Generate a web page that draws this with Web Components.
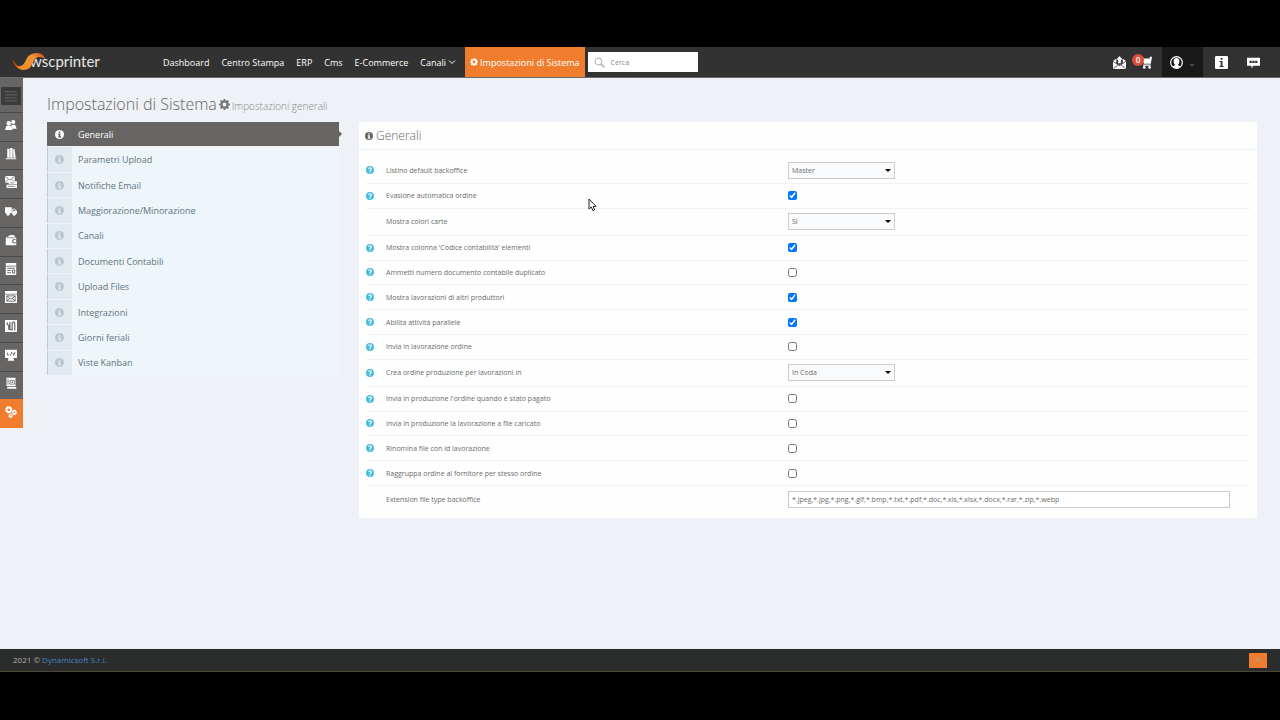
<!DOCTYPE html>
<html lang="it">
<head>
<meta charset="utf-8">
<title>Impostazioni di Sistema</title>
<style>
    body {
        margin: 0;
        background-color: #000;
        font-family: "Open Sans", "Noto Sans", sans-serif;
        font-size: 9px;
        --wsc-orange: #f07d2e;
        --wsc-dark: #323232;
        --wsc-grey: #666564;
    }
</style>
</head>
<body>
<wsc-page>
    <wsc-topbar slot="top">
        <wsc-nav-link>Dashboard</wsc-nav-link>
        <wsc-nav-link>Centro Stampa</wsc-nav-link>
        <wsc-nav-link>ERP</wsc-nav-link>
        <wsc-nav-link>Cms</wsc-nav-link>
        <wsc-nav-link>E-Commerce</wsc-nav-link>
        <wsc-nav-link dropdown>Canali</wsc-nav-link>
        <wsc-nav-link active icon="gear">Impostazioni di Sistema</wsc-nav-link>
    </wsc-topbar>
    <wsc-rail slot="rail"></wsc-rail>
    <wsc-heading sub="Impostazioni generali">Impostazioni di Sistema</wsc-heading>
    <wsc-columns>
        <wsc-tabs slot="aside">
            <wsc-tab active>Generali</wsc-tab>
            <wsc-tab>Parametri Upload</wsc-tab>
            <wsc-tab>Notifiche Email</wsc-tab>
            <wsc-tab>Maggiorazione/Minorazione</wsc-tab>
            <wsc-tab>Canali</wsc-tab>
            <wsc-tab>Documenti Contabili</wsc-tab>
            <wsc-tab>Upload Files</wsc-tab>
            <wsc-tab>Integrazioni</wsc-tab>
            <wsc-tab>Giorni feriali</wsc-tab>
            <wsc-tab>Viste Kanban</wsc-tab>
        </wsc-tabs>
        <wsc-panel title-text="Generali">
            <wsc-field help type="select" label="Listino default backoffice" value="Master"></wsc-field>
            <wsc-field help type="checkbox" label="Evasione automatica ordine" checked></wsc-field>
            <wsc-field type="select" label="Mostra colori carte" value="Si"></wsc-field>
            <wsc-field help type="checkbox" label="Mostra colonna 'Codice contabilità' elementi" checked></wsc-field>
            <wsc-field help type="checkbox" label="Ammetti numero documento contabile duplicato"></wsc-field>
            <wsc-field help type="checkbox" label="Mostra lavorazioni di altri produttori" checked></wsc-field>
            <wsc-field help type="checkbox" label="Abilita attività parallele" checked></wsc-field>
            <wsc-field help type="checkbox" label="Invia in lavorazione ordine"></wsc-field>
            <wsc-field help type="select" label="Crea ordine produzione per lavorazioni in" value="In Coda"></wsc-field>
            <wsc-field help type="checkbox" label="Invia in produzione l'ordine quando è stato pagato"></wsc-field>
            <wsc-field help type="checkbox" label="Invia in produzione la lavorazione a file caricato"></wsc-field>
            <wsc-field help type="checkbox" label="Rinomina file con id lavorazione"></wsc-field>
            <wsc-field help type="checkbox" label="Raggruppa ordine al fornitore per stesso ordine"></wsc-field>
            <wsc-field type="text" label="Extension file type backoffice" value="*.jpeg,*.jpg,*.png,*.gif,*.bmp,*.txt,*.pdf,*.doc,*.xls,*.xlsx,*.docx,*.rar,*.zip,*.webp"></wsc-field>
        </wsc-panel>
    </wsc-columns>
    <wsc-footer slot="bottom"></wsc-footer>
</wsc-page>

<script>
const ICONS = {
    gear: '<path fill="currentColor" fill-rule="evenodd" d="M6.800 0h2.400l.4 2.100 1.300.5L12.700 1.400l1.900 1.900-1.200 1.800.5 1.300 2.100.4v2.400l-2.100.4-.5 1.300 1.200 1.800-1.900 1.900-1.800-1.200-1.300.5-.4 2.100H6.800l-.4-2.100-1.300-.5-1.800 1.200-1.900-1.900 1.200-1.800-.5-1.300L0 9.200V6.800l2.100-.4.5-1.300-1.200-1.800 1.900-1.900 1.800 1.200 1.300-.5zM8 5.200a2.800 2.800 0 1 0 0 5.600 2.800 2.800 0 0 0 0-5.600z"/>',
    info: '<circle cx="8" cy="8" r="8" fill="currentColor"/><path fill="var(--icon-hole, #fff)" d="M6.500 2.500h3v2.500h-3zM5.500 6.300h4v5h1.300v2H5.500v-2h1.200v-3H5.500z"/>',
    help: '<circle cx="8" cy="8" r="8" fill="currentColor"/><path fill="none" stroke="#fff" stroke-width="2.200" d="M5.200 5.800C5.500 2.800 10.800 2.800 10.800 5.800 10.800 7.700 8 7.700 8 10"/><path fill="#fff" d="M6.900 11.200h2.300v2.200H6.900z"/>',
    chevron: '<path fill="none" stroke="currentColor" stroke-width="2" d="M2 5l6 6 6-6"/>',
    search: '<circle cx="6.500" cy="6.500" r="4.800" fill="none" stroke="currentColor" stroke-width="1.800"/><path stroke="currentColor" stroke-width="2.600" d="M10 10l5 5"/>',
    bars: '<path stroke="currentColor" stroke-width="1" d="M0 2.500h16M0 6.500h16M0 10.500h16M0 14.500h16"/>',
    users: '<g fill="currentColor"><circle cx="11" cy="4" r="2.800"/><path d="M8.500 7.500h5L15.500 13H9z"/><circle cx="5" cy="5.500" r="3"/><path d="M2 9h6l2 5.500H0z"/></g>',
    binders: '<g fill="currentColor"><path d="M3 1h3.200v12H3zM6.900 0h3.200v13H6.900zM10.800 1.500l1.900-.3 1.600 11.800h-3.200zM1 13.500h14V15H1z"/></g>',
    mailbox: '<path fill="currentColor" d="M0 0h13v9H0z"/><path fill="none" stroke="#666564" d="M0 .5l6.500 5L13 .5M0 8.500l4.500-4M13 8.500l-4.500-4"/><path fill="currentColor" d="M5 7h11v4H5zM2 11.700h14V16H2z"/><path stroke="#666564" d="M7 9.200h5M4 13.800h9"/>',
    truck: '<g fill="currentColor"><path d="M0 3h9v8H0zM9.700 5h3.300L16 8v3.500H9.700z"/><circle cx="4" cy="12" r="2.300"/><circle cx="12.200" cy="12" r="2.300"/></g><path fill="#666564" d="M10.800 6h1.800l1.600 2h-3.400z"/>',
    wallet: '<path fill="currentColor" d="M1 5l7-4 5 1v2.500h2V15H1z"/><path fill="none" stroke="#666564" d="M2.500 5H13"/><circle cx="12.500" cy="9.500" r="3" fill="#666564"/><circle cx="13" cy="9.500" r="1.800" fill="currentColor"/>',
    layout: '<path fill="currentColor" d="M1 0h14v3.500H1zM1 4.500h14V16H1z"/><path stroke="#666564" fill="none" stroke-width="1.300" d="M3 7h10M3 10h5M3 13h5M10 9.500h3v4h-3z"/>',
    webmail: '<path fill="currentColor" d="M0 0h16v3.500H0zM0 4.500h16V16H0z"/><path stroke="#666564" fill="none" stroke-width="1.200" d="M2.500 6.500h11v7h-11zM2.500 6.500L8 11l5.500-4.500M2.500 13.500l4-4M13.500 13.500l-4-4"/>',
    tools: '<path fill="currentColor" d="M0 0h16v16H0z"/><path stroke="#666564" fill="none" stroke-width="1.600" d="M3 3v3l2 1v6M6.500 2.500v10l3 .5V4l2-1.500 1.500 2V14"/>',
    monitor: '<path fill="currentColor" d="M0 1h16v11H0zM5 12h6l1.500 3.500h-9z"/><path stroke="#666564" fill="none" stroke-width="1.200" d="M3 4.500v3.500h2.500M7 9l2-5M10.500 5l1 3.500L13.500 4"/>',
    book: '<path fill="currentColor" d="M2 1h12v11H2zM3 13h12v2.500H3z"/><path stroke="#666564" fill="none" d="M4 2.500v8M6.500 4.500h6v5h-6zM8 8V6.500M10 8V5.500"/>',
    gears: '<g fill="none" stroke="currentColor"><circle cx="5" cy="5" r="3" stroke-width="2.400"/><circle cx="5" cy="5" r="4.400" stroke-width="1.200" stroke-dasharray="1.700 1.700"/><circle cx="12.500" cy="8.500" r="2.100" stroke-width="1.900"/><circle cx="12.500" cy="8.500" r="3.200" stroke-dasharray="1.200 1.200"/><circle cx="7.500" cy="13" r="1.700" stroke-width="1.600"/><circle cx="7.500" cy="13" r="2.600" stroke-dasharray="1 1"/></g>',
    inbox: '<path fill="currentColor" d="M0 6l4-2.500V9l4 2.500L12 9V3.500L16 6v10H0z"/><path fill="currentColor" d="M8 0l4 4.500H9.700V9H6.300V4.500H4z"/><path stroke="#323232" fill="none" stroke-width="1" d="M0 6.500l8 5.500 8-5.500M.5 15.500L6 11M15.500 15.500L10 11"/>',
    cart: '<path fill="currentColor" d="M16 1l-1.500 8.500H6L3.500 3H0V1.500h5L6 3h7l.5-2zM5 10.500h9.500V12H5z"/><circle cx="6.500" cy="14" r="1.700" fill="currentColor"/><circle cx="13" cy="14" r="1.700" fill="currentColor"/>',
    user: '<circle cx="8" cy="8" r="7.200" fill="none" stroke="currentColor" stroke-width="1.500"/><path fill="currentColor" d="M8 2.500c2.500 0 3.800 1.800 3.600 4C11.500 8.500 10.800 9.500 10 10.500v1l3 1.500C10.500 16 5.500 16 3 13l3-1.500v-1C5.200 9.500 4.500 8.500 4.400 6.500 4.200 4.300 5.500 2.500 8 2.500z"/>',
    infobox: '<rect width="16" height="16" rx="1.500" fill="currentColor"/><path fill="#323232" d="M7 2.500h2.300v2.200H7zM5.500 6.200h3.700v6h1.500v1.300H5.500v-1.300H7V7.500H5.500z"/>',
    chat: '<path fill="currentColor" d="M0 2h16v10H8l-2.500 3V12H0z"/><path stroke="#323232" stroke-width="2.600" stroke-dasharray="2.800 .7" d="M3 7.200h10.300"/>',
    up: '<path fill="none" stroke="#b49a78" stroke-width="2" stroke-dasharray="3 1" d="M2 12l6-6 6 6"/><circle cx="8" cy="5" r="2" fill="#b49a78"/>'
};

class WscElement extends HTMLElement {
    constructor() {
        super();
        this.attachShadow({mode: 'open'});
    }

    connectedCallback() {
        this.shadowRoot.innerHTML = this.render();
    }
}

class WscIcon extends WscElement {
    render() {
        return `
            <style>
                :host {
                    display: inline-block;
                    flex: none;
                    width: var(--icon-size, 12px);
                    height: var(--icon-size, 12px);
                }
                svg {
                    display: block;
                    width: 100%;
                    height: 100%;
                }
            </style>
            <svg viewBox="0 0 16 16" aria-hidden="true">${ICONS[this.getAttribute('name')]}</svg>
        `;
    }
}

class WscPage extends WscElement {
    render() {
        return `
            <style>
                :host {
                    display: flex;
                    flex-direction: column;
                    box-sizing: border-box;
                    min-height: 100vh;
                    padding: 47px 0 48px;
                }
                .body {
                    display: flex;
                    flex: 1;
                    align-items: flex-start;
                    background-color: #eef1f5;
                }
                main {
                    flex: 1;
                    min-width: 0;
                    padding: 16px 23px 16px 24px;
                }
                .pointer {
                    position: absolute;
                    left: 588px;
                    top: 198px;
                    width: 9px;
                    height: 14px;
                }
            </style>
            <slot name="top"></slot>
            <div class="body">
                <slot name="rail"></slot>
                <main><slot></slot></main>
            </div>
            <slot name="bottom"></slot>
            <svg class="pointer" viewBox="0 0 9 14" aria-hidden="true">
                <path d="M1 1v10l2.300-2 1.700 3.700 1.700-.8-1.600-3.500h3z" fill="#fff" stroke="#222" stroke-width="1"/>
            </svg>
        `;
    }
}

class WscNavLink extends WscElement {
    render() {
        const icon = this.getAttribute('icon');
        return `
            <style>
                :host {
                    display: block;
                    --icon-size: 8px;
                }
                a {
                    display: flex;
                    align-items: center;
                    gap: 2px;
                    height: 30px;
                    padding: 0 6px;
                    color: #fff;
                    text-decoration: none;
                    white-space: nowrap;
                }
                :host([active]) a {
                    padding: 0 5px;
                    background-color: var(--wsc-orange);
                }
                .arrow {
                    padding-right: 3px;
                }
            </style>
            <a href="#">${icon ? `<wsc-icon name="${icon}"></wsc-icon>` : ''}<span><slot></slot></span>${this.hasAttribute('dropdown') ? '<wsc-icon class="arrow" name="chevron"></wsc-icon>' : ''}</a>
        `;
    }
}

class WscTopbar extends WscElement {
    render() {
        return `
            <style>
                :host {
                    display: flex;
                    align-items: center;
                    height: 30px;
                    background-color: var(--wsc-dark);
                    border-bottom: 1px solid #6b6b6b;
                    color: #fff;
                }
                .logo {
                    display: flex;
                    box-sizing: border-box;
                    width: 157px;
                    padding-left: 12px;
                    color: #eee;
                    text-decoration: none;
                }
                nav {
                    display: flex;
                }
                .search {
                    display: flex;
                    align-items: center;
                    gap: 6px;
                    box-sizing: border-box;
                    width: 110px;
                    height: 20px;
                    margin-left: 3px;
                    padding: 0 6px;
                    background-color: #fff;
                    color: #b8bcbc;
                    --icon-size: 11px;
                }
                input {
                    flex: 1;
                    min-width: 0;
                    padding: 0;
                    border: 0;
                    outline: 0;
                    font: 7px "Open Sans", sans-serif;
                }
                input::placeholder {
                    color: #888;
                }
                .actions {
                    display: flex;
                    align-items: center;
                    margin-left: auto;
                    padding-right: 20px;
                    --icon-size: 13px;
                }
                button {
                    display: flex;
                    align-items: center;
                    justify-content: center;
                    position: relative;
                    width: 26px;
                    height: 30px;
                    padding: 0;
                    border: 0;
                    background: none;
                    color: #fff;
                    font: 8px "Open Sans", sans-serif;
                }
                .user {
                    gap: 6px;
                    width: 41px;
                    margin-left: 4px;
                    background-color: #191919;
                }
                .user .arrow {
                    --icon-size: 6px;
                    padding-top: 6px;
                    color: #999;
                }
                .note {
                    width: 13px;
                    margin-left: 12px;
                }
                .chat {
                    width: 13px;
                    margin-left: 19px;
                }
                .badge {
                    position: absolute;
                    left: 0;
                    top: 7px;
                    width: 12px;
                    border-radius: 6px;
                    background-color: #dd4b39;
                    font-weight: 600;
                    line-height: 12px;
                    text-align: center;
                }
            </style>
            <a class="logo" href="#" aria-label="wscprinter">
                <svg width="92" height="22" viewBox="0 0 92 22" aria-hidden="true">
                    <defs>
                        <linearGradient id="swoosh" x1="0" x2="1" y1="1" y2="0">
                            <stop offset="0" stop-color="#f08a24"/>
                            <stop offset=".7" stop-color="#f39236"/>
                            <stop offset="1" stop-color="#c8421e"/>
                        </linearGradient>
                    </defs>
                    <text x="18" y="16" font-family="Lato, sans-serif" font-size="15" fill="#e8e8e8">wscprinter</text>
                    <path fill="#c8421e" d="M1 8c0 4 2 8 6 10l4 1C6 15 2 12 1 8z"/>
                    <path fill="url(#swoosh)" d="M5 15c5 1 7-2 9-6 2-5 6-7 11-7 4 0 7 2 8 6-3-2-7-3-10 0-3 4-3 8-7 10-4 2-9 1-11-3z"/>
                </svg>
            </a>
            <nav><slot></slot></nav>
            <label class="search"><wsc-icon name="search"></wsc-icon><input type="text" placeholder="Cerca" aria-label="Cerca"></label>
            <div class="actions">
                <button type="button" aria-label="Posta"><wsc-icon name="inbox"></wsc-icon></button>
                <button type="button" aria-label="Carrello"><wsc-icon name="cart"></wsc-icon><span class="badge">0</span></button>
                <button type="button" class="user" aria-label="Utente"><wsc-icon name="user"></wsc-icon><wsc-icon class="arrow" name="chevron"></wsc-icon></button>
                <button type="button" class="note" aria-label="Info"><wsc-icon name="infobox"></wsc-icon></button>
                <button type="button" class="chat" aria-label="Chat"><wsc-icon name="chat"></wsc-icon></button>
            </div>
        `;
    }
}

class WscRail extends WscElement {
    render() {
        const items = ['users', 'binders', 'mailbox', 'truck', 'wallet', 'layout', 'webmail', 'tools', 'monitor', 'book', 'gears'];
        return `
            <style>
                :host {
                    display: flex;
                    flex-direction: column;
                    width: 23px;
                    min-height: 350px;
                    background-color: var(--wsc-grey);
                }
                button {
                    display: flex;
                    align-items: center;
                    justify-content: center;
                    width: 20px;
                    height: 18px;
                    margin: 9px 0 7px 1px;
                    padding: 0;
                    border: 0;
                    background-color: #3c3b3b;
                    color: #74706a;
                }
                a {
                    display: flex;
                    flex: 1;
                    align-items: center;
                    justify-content: center;
                    padding: 0 1px 4px 0;
                    border-top: 1px solid #4b4a4a;
                    color: #fff;
                }
                a:last-child {
                    background-color: var(--wsc-orange);
                    border-color: var(--wsc-orange);
                }
            </style>
            <button type="button" aria-label="Menu"><wsc-icon name="bars"></wsc-icon></button>
            ${items.map(name => `<a href="#" aria-label="${name}"><wsc-icon name="${name}"></wsc-icon></a>`).join('')}
        `;
    }
}

class WscHeading extends WscElement {
    render() {
        return `
            <style>
                :host {
                    display: block;
                    color: #666;
                    --icon-size: 11px;
                }
                h1 {
                    display: flex;
                    align-items: center;
                    gap: 2px;
                    margin: 0 0 8px;
                    font-size: 16px;
                    font-weight: 300;
                    line-height: 20px;
                }
                small {
                    padding-top: 4px;
                    font-size: 10px;
                    line-height: 16px;
                    color: #888;
                }
                wsc-icon {
                    color: #777;
                }
            </style>
            <h1><span><slot></slot></span><wsc-icon name="gear"></wsc-icon><small>${this.getAttribute('sub')}</small></h1>
        `;
    }
}

class WscColumns extends WscElement {
    render() {
        return `
            <style>
                :host {
                    display: grid;
                    grid-template-columns: 292px minmax(0, 1fr);
                    gap: 20px;
                    align-items: start;
                }
            </style>
            <slot name="aside"></slot>
            <slot></slot>
        `;
    }
}

class WscTabs extends WscElement {
    render() {
        return `
            <style>
                :host {
                    display: flex;
                    flex-direction: column;
                    gap: 1px;
                    min-height: 253px;
                }
            </style>
            <slot></slot>
        `;
    }
}

class WscTab extends WscElement {
    render() {
        return `
            <style>
                :host {
                    display: flex;
                    flex: 1;
                    position: relative;
                    --icon-size: 9px;
                    --icon-hole: #e1eaf1;
                }
                a {
                    display: flex;
                    flex: 1;
                    background-color: #eef5fb;
                    color: #5f7480;
                    text-decoration: none;
                }
                .mark {
                    display: flex;
                    align-items: center;
                    justify-content: center;
                    width: 22px;
                    padding-right: 2px;
                    border-left: 1px solid #b4d0d6;
                    background-color: #e1eaf1;
                    color: #b9c6cc;
                }
                .text {
                    align-self: center;
                    padding-left: 6px;
                }
                :host([active]) {
                    --icon-hole: var(--wsc-grey);
                }
                :host([active]) a,
                :host([active]) .mark {
                    border-color: var(--wsc-grey);
                    background-color: var(--wsc-grey);
                    color: #fff;
                }
                :host([active])::after {
                    content: "";
                    position: absolute;
                    left: 100%;
                    top: 9px;
                    border: 3px solid transparent;
                    border-left-color: var(--wsc-grey);
                }
            </style>
            <a href="#"><span class="mark"><wsc-icon name="info"></wsc-icon></span><span class="text"><slot></slot></span></a>
        `;
    }
}

class WscPanel extends WscElement {
    render() {
        return `
            <style>
                :host {
                    display: block;
                    background-color: #fdfefd;
                    --icon-size: 8px;
                }
                h2 {
                    display: flex;
                    align-items: center;
                    gap: 3px;
                    margin: 0;
                    padding: 0 6px;
                    border-bottom: 1px solid #eef1f5;
                    color: #666;
                    font-size: 12px;
                    font-weight: 300;
                    line-height: 27px;
                }
                form {
                    display: flex;
                    flex-direction: column;
                    min-height: 357px;
                    padding: 7px 7px 4px;
                }
            </style>
            <h2><wsc-icon name="info"></wsc-icon>${this.getAttribute('title-text')}</h2>
            <form><slot></slot></form>
        `;
    }
}

class WscField extends WscElement {
    control() {
        const value = this.getAttribute('value');
        switch (this.getAttribute('type')) {
            case 'select':
                return `<span class="select"><select id="control"><option>${value}</option></select></span>`;
            case 'checkbox':
                return `<input id="control" type="checkbox" ${this.hasAttribute('checked') ? 'checked' : ''}>`;
            default:
                return `<input id="control" type="text" value="${value}">`;
        }
    }

    render() {
        return `
            <style>
                :host {
                    display: grid;
                    grid-template-columns: 20px minmax(0, 87fr) minmax(0, 100fr);
                    align-items: center;
                    flex: 1 0 24px;
                    box-sizing: border-box;
                    border-bottom: 1px solid #f0f2f5;
                    color: #6c6c6c;
                    font-size: 7px;
                    --icon-size: 8px;
                }
                :host([type="select"]) {
                    flex: 0 0 27px;
                }
                :host([type="text"]) {
                    flex: 0 0 28px;
                    border-bottom: 0;
                }
                .help {
                    display: flex;
                    color: #48bcdc;
                }
                input, select {
                    margin: 0;
                    box-sizing: border-box;
                    color: #6c6c6c;
                    font: inherit;
                }
                .cell {
                    display: flex;
                    align-items: center;
                    padding-right: 20px;
                }
                input[type="checkbox"] {
                    width: 9px;
                    height: 9px;
                }
                input[type="text"] {
                    width: 100%;
                    height: 17px;
                    padding: 0 3px;
                    border: 1px solid #c8ccd0;
                    background-color: #fff;
                }
                .select {
                    display: block;
                    position: relative;
                }
                select {
                    display: block;
                    width: 107px;
                    height: 17px;
                    padding: 0 3px;
                    border: 1px solid #ccc;
                    border-radius: 0;
                    background-color: #f9fafc;
                    appearance: none;
                }
                .select::after {
                    content: "";
                    position: absolute;
                    right: 4px;
                    top: 7px;
                    border: 3px solid transparent;
                    border-top-color: #000;
                    border-bottom: 0;
                    pointer-events: none;
                }
            </style>
            <span class="help">${this.hasAttribute('help') ? '<wsc-icon name="help"></wsc-icon>' : ''}</span>
            <label for="control">${this.getAttribute('label')}</label>
            <span class="cell">${this.control()}</span>
        `;
    }
}

class WscFooter extends WscElement {
    render() {
        return `
            <style>
                :host {
                    display: flex;
                    align-items: center;
                    justify-content: space-between;
                    height: 22px;
                    padding: 0 13px;
                    border-bottom: 1px solid #4a4638;
                    background-color: #2b2c2c;
                    color: #b4b4b4;
                    font-size: 8px;
                    --icon-size: 10px;
                }
                span {
                    padding-bottom: 2px;
                }
                a {
                    color: #4288c4;
                    text-decoration: none;
                }
                button {
                    display: flex;
                    align-items: center;
                    justify-content: center;
                    width: 18px;
                    height: 15px;
                    padding: 0;
                    border: 0;
                    background-color: var(--wsc-orange);
                }
            </style>
            <span>2021 © <a href="#">Dynamicsoft S.r.l.</a></span>
            <button type="button" aria-label="Torna su"><wsc-icon name="up"></wsc-icon></button>
        `;
    }
}

customElements.define('wsc-icon', WscIcon);
customElements.define('wsc-page', WscPage);
customElements.define('wsc-nav-link', WscNavLink);
customElements.define('wsc-topbar', WscTopbar);
customElements.define('wsc-rail', WscRail);
customElements.define('wsc-heading', WscHeading);
customElements.define('wsc-columns', WscColumns);
customElements.define('wsc-tabs', WscTabs);
customElements.define('wsc-tab', WscTab);
customElements.define('wsc-panel', WscPanel);
customElements.define('wsc-field', WscField);
customElements.define('wsc-footer', WscFooter);
</script>
</body>
</html>
